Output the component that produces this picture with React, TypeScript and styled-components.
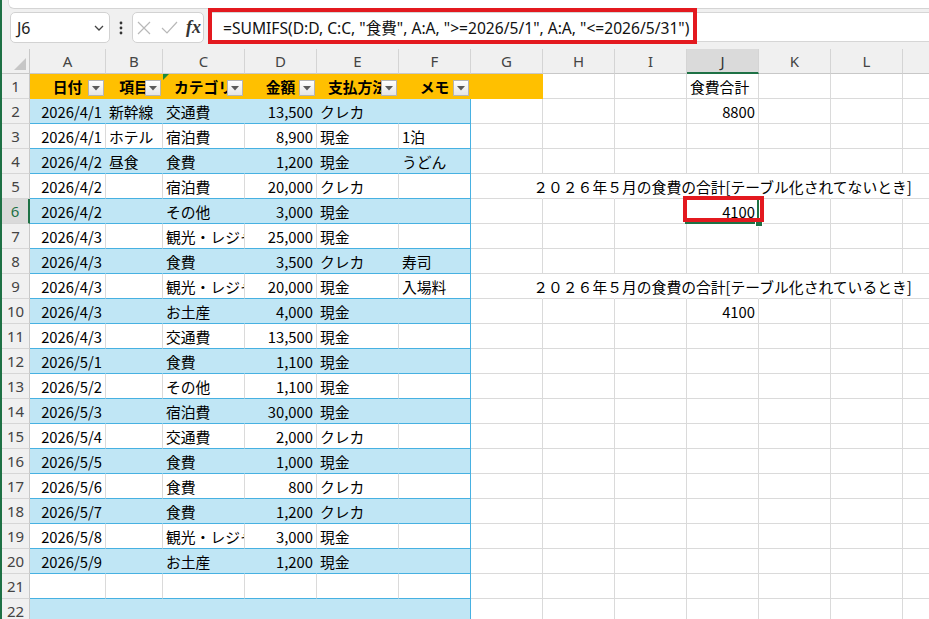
import React from 'react';
import styled, { createGlobalStyle } from 'styled-components';

const GREEN = '#1e7145';
const ORANGE = '#ffc000';
const BAND = '#c0e6f5';
const TBORDER = '#47b1e2';
const GRID = '#dadada';
const RED = '#e3191f';

const GlobalStyle = createGlobalStyle`
  html, body { margin: 0; padding: 0; background: #fff; }
  body { font-family: "Noto Sans CJK JP", "Noto Sans", sans-serif; }
`;

const Frame = styled.div`
  width: 929px;
  height: 619px;
  overflow: hidden;
  box-sizing: border-box;
  border-left: 2px solid ${GREEN};
  background: #f0f0f0;
  display: flex;
  flex-direction: column;
`;

const RibbonEdge = styled.div`
  flex: none;
  height: 8px;
  margin-left: 6px;
  background: #fff;
  border-bottom: 1px solid #d4d4d4;
  border-left: 1px solid #dedede;
  border-bottom-left-radius: 6px;
`;

const FormulaRow = styled.div`
  flex: none;
  height: 40px;
  box-sizing: border-box;
  padding: 3px 0 0 8px;
  display: flex;
  align-items: flex-start;
`;

const NameBox = styled.div`
  box-sizing: border-box;
  width: 100px;
  height: 31px;
  background: #fff;
  border: 1px solid #d2d2d2;
  border-radius: 5px;
  display: flex;
  align-items: center;
  justify-content: space-between;
  padding: 0 5px 0 6px;
  font-family: "Noto Sans", sans-serif;
  font-size: 16px;
  color: #222;
`;

const Dots = styled.div`
  width: 22px;
  height: 31px;
  display: flex;
  align-items: center;
  justify-content: center;
`;

const FxBox = styled.div`
  box-sizing: border-box;
  width: 72px;
  height: 31px;
  background: #fff;
  border: 1px solid #d2d2d2;
  border-radius: 5px;
  display: flex;
  align-items: center;
  padding-left: 4px;
`;

const FxIconSlot = styled.span<{ $gap: number }>`
  display: flex;
  align-items: center;
  margin-right: ${(p) => p.$gap}px;
`;

const FxLabel = styled.span`
  font-family: "Liberation Serif", "DejaVu Serif", serif;
  font-style: italic;
  font-weight: 700;
  font-size: 18px;
  color: #333;
  line-height: 1;
  margin-top: -2px;
`;

const FormulaInput = styled.div`
  position: relative;
  flex: 1;
  box-sizing: border-box;
  height: 30px;
  margin-left: 4px;
  background: #fff;
  border-top: 1px solid #d6d6d6;
  border-bottom: 1px solid #d6d6d6;
  display: flex;
  align-items: center;
  padding-left: 15px;
  font-family: "Noto Sans", "Noto Sans CJK JP", sans-serif;
  font-size: 15.6px;
  color: #111;
  white-space: nowrap;
`;

const Annotation = styled.div<{ $w: number; $h: number; $l: number; $t: number; $b: number }>`
  position: absolute;
  z-index: 3;
  box-sizing: border-box;
  left: ${(p) => p.$l}px;
  top: ${(p) => p.$t}px;
  width: ${(p) => p.$w}px;
  height: ${(p) => p.$h}px;
  border: ${(p) => p.$b}px solid ${RED};
  pointer-events: none;
`;

const Sheet = styled.div<{ $cols: string }>`
  flex: 1;
  display: grid;
  grid-template-columns: ${(p) => p.$cols};
  grid-auto-rows: 25px;
  background: #fff;
  overflow: hidden;
`;

const Corner = styled.div`
  box-sizing: border-box;
  background: #f0f0f0;
  border-right: 1px solid #c8c8c8;
  border-bottom: 1px solid #c8c8c8;
  display: flex;
  align-items: flex-end;
  justify-content: flex-end;
  padding: 0 3px 3px 0;
`;

const ColHeader = styled.div<{ $active?: boolean }>`
  box-sizing: border-box;
  display: flex;
  align-items: center;
  justify-content: center;
  background: ${(p) => (p.$active ? '#dadada' : '#f0f0f0')};
  border-right: 1px solid #d4d4d4;
  border-bottom: ${(p) => (p.$active ? `2px solid ${GREEN}` : '1px solid #c8c8c8')};
  font-family: "Noto Sans", sans-serif;
  font-size: 15px;
  color: ${(p) => (p.$active ? '#333' : '#444')};
`;

const RowHeader = styled.div<{ $active?: boolean }>`
  box-sizing: border-box;
  display: flex;
  align-items: center;
  justify-content: center;
  background: ${(p) => (p.$active ? '#dadada' : '#f0f0f0')};
  color: ${(p) => (p.$active ? GREEN : '#444')};
  border-bottom: 1px solid #d6d6d6;
  border-right: ${(p) => (p.$active ? `2px solid ${GREEN}` : '1px solid #c8c8c8')};
  font-family: "Noto Sans", sans-serif;
  font-size: 15px;
`;

type Align = 'left' | 'right' | 'center';

const Cell = styled.div<{
  $bg: string;
  $v: string;
  $h: string;
  $align: Align;
  $bold?: boolean;
  $spill?: boolean;
}>`
  position: relative;
  box-sizing: border-box;
  min-width: 0;
  display: flex;
  align-items: center;
  justify-content: ${(p) =>
    p.$align === 'right' ? 'flex-end' : p.$align === 'center' ? 'center' : 'flex-start'};
  padding: 0 3px 0 3px;
  background: ${(p) => p.$bg};
  border-right: 1px solid ${(p) => p.$v};
  border-bottom: 1px solid ${(p) => p.$h};
  font-size: 14.8px;
  font-weight: ${(p) => (p.$bold ? 700 : 400)};
  color: #000;
  white-space: nowrap;
  overflow: ${(p) => (p.$spill ? 'visible' : 'hidden')};
`;

const CellText = styled.span`
  flex: none;
`;

const FilterButton = styled.div`
  position: absolute;
  right: 1px;
  bottom: 2px;
  width: 16px;
  height: 16px;
  box-sizing: border-box;
  border: 1px solid #b4b4b4;
  background: linear-gradient(#ffffff, #e4e4e4);
  display: flex;
  align-items: center;
  justify-content: center;
`;

const ErrorMark = styled.div`
  position: absolute;
  left: 0;
  top: 0;
  width: 0;
  height: 0;
  border-top: 6px solid #1a8a3c;
  border-right: 6px solid transparent;
`;

const Selection = styled.div`
  position: absolute;
  z-index: 2;
  left: -2px;
  top: -1px;
  right: -1px;
  bottom: -1px;
  border: 2px solid ${GREEN};
  pointer-events: none;
`;

const FillHandle = styled.div`
  position: absolute;
  z-index: 2;
  right: -4px;
  bottom: -3px;
  width: 6px;
  height: 6px;
  box-sizing: border-box;
  background: ${GREEN};
  outline: 1px solid #fff;
`;

const colNames = ['A', 'B', 'C', 'D', 'E', 'F', 'G', 'H', 'I', 'J', 'K', 'L', 'M'];
const widths = [76, 57, 82, 72, 82, 72, 72, 72, 72, 72, 72, 72, 72];
const headers = ['日付', '項目', 'カテゴリ', '金額', '支払方法', 'メモ'];
const aligns: Align[] = ['right', 'left', 'left', 'right', 'left', 'left'];

const data: string[][] = [
  ['2026/4/1', '新幹線', '交通費', '13,500', 'クレカ', ''],
  ['2026/4/1', 'ホテル', '宿泊費', '8,900', '現金', '1泊'],
  ['2026/4/2', '昼食', '食費', '1,200', '現金', 'うどん'],
  ['2026/4/2', '', '宿泊費', '20,000', 'クレカ', ''],
  ['2026/4/2', '', 'その他', '3,000', '現金', ''],
  ['2026/4/3', '', '観光・レジャー', '25,000', '現金', ''],
  ['2026/4/3', '', '食費', '3,500', 'クレカ', '寿司'],
  ['2026/4/3', '', '観光・レジャー', '20,000', '現金', '入場料'],
  ['2026/4/3', '', 'お土産', '4,000', '現金', ''],
  ['2026/4/3', '', '交通費', '13,500', '現金', ''],
  ['2026/5/1', '', '食費', '1,100', '現金', ''],
  ['2026/5/2', '', 'その他', '1,100', '現金', ''],
  ['2026/5/3', '', '宿泊費', '30,000', '現金', ''],
  ['2026/5/4', '', '交通費', '2,000', 'クレカ', ''],
  ['2026/5/5', '', '食費', '1,000', '現金', ''],
  ['2026/5/6', '', '食費', '800', 'クレカ', ''],
  ['2026/5/7', '', '食費', '1,200', 'クレカ', ''],
  ['2026/5/8', '', '観光・レジャー', '3,000', '現金', ''],
  ['2026/5/9', '', 'お土産', '1,200', '現金', ''],
  ['', '', '', '', '', ''],
  ['', '', '', '', '', ''],
];

const jValues: Record<number, { text: string; align: Align; spill?: boolean }> = {
  1: { text: '食費合計', align: 'left' },
  2: { text: '8800', align: 'right' },
  5: { text: '２０２６年５月の食費の合計[テーブル化されてないとき]', align: 'center', spill: true },
  6: { text: '4100', align: 'right' },
  9: { text: '２０２６年５月の食費の合計[テーブル化されているとき]', align: 'center', spill: true },
  10: { text: '4100', align: 'right' },
};

const ChevronIcon = () => (
  <svg width="10" height="6" viewBox="0 0 10 6">
    <polyline points="1,1 5,5 9,1" fill="none" stroke="#444" strokeWidth="1.3" />
  </svg>
);

const DotsIcon = () => (
  <svg width="4" height="14" viewBox="0 0 4 14">
    <circle cx="2" cy="2" r="1.4" fill="#333" />
    <circle cx="2" cy="7" r="1.4" fill="#333" />
    <circle cx="2" cy="12" r="1.4" fill="#333" />
  </svg>
);

const CancelIcon = () => (
  <svg width="14" height="14" viewBox="0 0 14 14">
    <path d="M1 1 L13 13 M13 1 L1 13" stroke="#b8b8b8" strokeWidth="1.2" fill="none" />
  </svg>
);

const CheckIcon = () => (
  <svg width="17" height="13" viewBox="0 0 17 13">
    <polyline points="1,7 6,12 16,1" stroke="#b8b8b8" strokeWidth="1.2" fill="none" />
  </svg>
);

const TriangleDown = () => (
  <svg width="8" height="5" viewBox="0 0 8 5">
    <polygon points="0,0 8,0 4,4.5" fill="#5a5a5a" />
  </svg>
);

const CornerTriangle = () => (
  <svg width="12" height="12" viewBox="0 0 12 12">
    <polygon points="0,12 12,12 12,0" fill="#c6c6c6" />
  </svg>
);

export default function App() {
  const gridCols = `28px ${widths.map((w) => `${w}px`).join(' ')}`;
  const activeRow = 6;
  const activeCol = 9;

  const renderRow = (r: number) => {
    const cells: React.ReactNode[] = [];
    for (let c = 0; c < colNames.length; c++) {
      const key = `${r}-${c}`;
      if (r === 1) {
        if (c < 6) {
          cells.push(
            <Cell key={key} $bg={ORANGE} $v={ORANGE} $h={ORANGE} $align="center" $bold>
              {c === 2 && <ErrorMark />}
              <CellText>{headers[c]}</CellText>
              <FilterButton>
                <TriangleDown />
              </FilterButton>
            </Cell>
          );
        } else if (c === 6) {
          cells.push(<Cell key={key} $bg={ORANGE} $v={ORANGE} $h={ORANGE} $align="left" />);
        } else {
          const j = c === 9 ? jValues[r] : undefined;
          cells.push(
            <Cell key={key} $bg="transparent" $v={GRID} $h={GRID} $align={j?.align ?? 'left'}>
              {j && <CellText>{j.text}</CellText>}
            </Cell>
          );
        }
        continue;
      }
      if (c < 6) {
        const band = r % 2 === 0;
        const text = data[r - 2][c];
        cells.push(
          <Cell
            key={key}
            $bg={band ? BAND : 'transparent'}
            $v={c === 5 ? TBORDER : band ? BAND : GRID}
            $h={TBORDER}
            $align={aligns[c]}
          >
            {text && <CellText>{text}</CellText>}
          </Cell>
        );
      } else {
        const spillRow = r === 5 || r === 9;
        const j = c === 9 ? jValues[r] : undefined;
        const active = r === activeRow && c === activeCol;
        cells.push(
          <Cell
            key={key}
            $bg="transparent"
            $v={spillRow && c < 12 ? 'transparent' : GRID}
            $h={GRID}
            $align={j?.align ?? 'left'}
            $spill={j?.spill || active}
          >
            {j && <CellText>{j.text}</CellText>}
            {active && (
              <>
                <Selection />
                <FillHandle />
                <Annotation $l={-4} $t={-3} $w={81} $h={26} $b={4} />
              </>
            )}
          </Cell>
        );
      }
    }
    return cells;
  };

  const rows: React.ReactNode[] = [];
  for (let r = 1; r <= 22; r++) {
    rows.push(
      <RowHeader key={`rh-${r}`} $active={r === activeRow}>
        {r}
      </RowHeader>
    );
    rows.push(...renderRow(r));
  }

  return (
    <>
      <GlobalStyle />
      <Frame>
        <RibbonEdge />
        <FormulaRow>
          <NameBox>
            <span>J6</span>
            <ChevronIcon />
          </NameBox>
          <Dots>
            <DotsIcon />
          </Dots>
          <FxBox>
            <FxIconSlot $gap={10}>
              <CancelIcon />
            </FxIconSlot>
            <FxIconSlot $gap={8}>
              <CheckIcon />
            </FxIconSlot>
            <FxLabel>fx</FxLabel>
          </FxBox>
          <FormulaInput>
            =SUMIFS(D:D, C:C, "食費", A:A, "&gt;=2026/5/1", A:A, "&lt;=2026/5/31")
            <Annotation $l={0} $t={-5} $w={489} $h={36} $b={4} />
          </FormulaInput>
        </FormulaRow>
        <Sheet $cols={gridCols}>
          <Corner>
            <CornerTriangle />
          </Corner>
          {colNames.map((n, i) => (
            <ColHeader key={n} $active={i === activeCol}>
              {n}
            </ColHeader>
          ))}
          {rows}
        </Sheet>
      </Frame>
    </>
  );
}
